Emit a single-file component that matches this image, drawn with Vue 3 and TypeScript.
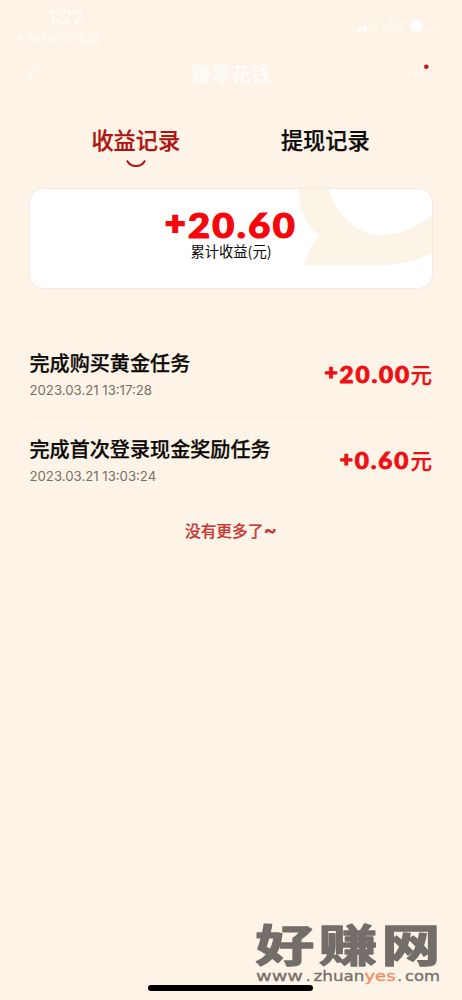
<script setup lang="ts">
interface Entry {
  title: string
  time: string
  amount: string
}

const entries: Entry[] = [
  { title: '完成购买黄金任务', time: '2023.03.21 13:17:28', amount: '20.00' },
  { title: '完成首次登录现金奖励任务', time: '2023.03.21 13:03:24', amount: '0.60' },
]
</script>

<template>
  <main class="screen">
    <header class="top">
      <div class="status">
        <div class="clock">
          <span class="time">1:22</span>
          <span class="back-app"><svg width="7" height="8" viewBox="0 0 7 8"><path d="M7 0v8L0 4z" fill="#fffdfa" /></svg>Safari浏览器</span>
        </div>
        <div class="signals">
          <svg width="22" height="12" viewBox="0 0 22 12" fill="#fffdfa">
            <rect x="1" y="7" width="4" height="5" rx="1" />
            <rect x="7" y="6" width="4" height="6" rx="1" />
            <rect x="13" y="3" width="3" height="9" rx="1" opacity=".25" />
            <rect x="18" y="0" width="3" height="12" rx="1" opacity=".25" />
          </svg>
          <span class="network">4G</span>
          <svg width="28" height="14" viewBox="0 0 28 14">
            <rect x="1" y="1.500" width="23" height="11" rx="3.500" fill="none" stroke="#fffdfa" opacity=".3" />
            <rect x="0" y="1" width="11" height="11" rx="4" fill="#fffefd" />
            <path d="M26 5v4" stroke="#fffdfa" opacity=".4" />
          </svg>
        </div>
      </div>
      <nav class="nav">
        <svg class="chevron" width="14" height="20" viewBox="0 0 14 20"><path d="M11.500 1.500 2 10l9.500 8.500" fill="none" stroke="#fffaf4" stroke-width="1.800" /></svg>
        <span class="nav-title">赚零花钱</span>
        <svg class="more" width="30" height="22" viewBox="0 0 30 22">
          <g fill="#fffaf5"><circle cx="4" cy="13.500" r="2" /><circle cx="11" cy="13.500" r="2" /><circle cx="18" cy="13.500" r="2" /></g>
          <circle cx="22.300" cy="6.800" r="2.300" fill="#c9151b" />
        </svg>
      </nav>
    </header>

    <div class="tabs">
      <button class="tab active">
        收益记录
        <svg class="smile" width="22" height="10" viewBox="0 0 22 10"><path d="M2 1.500C5.500 8.900 16.500 8.900 20 1.500" fill="none" stroke="#b21513" stroke-width="1.900" /></svg>
      </button>
      <button class="tab">提现记录</button>
    </div>

    <section class="card">
      <svg class="swirl" width="134" height="100" viewBox="0 0 134 100">
        <path d="M0 0C1 20 8 36 21 47C14 55 9 65 6 76H86C104 76 120 71 134 64V26C116 41 98 47 74 46C50 37 37 21 31 0Z" fill="#fdf4e8" />
      </svg>
      <strong class="total"><span class="sign">+</span>20.60</strong>
      <span class="caption">累计收益(元)</span>
    </section>

    <ul class="list">
      <li v-for="entry in entries" :key="entry.time" class="row">
        <div class="info">
          <span class="title">{{ entry.title }}</span>
          <span class="date">{{ entry.time }}</span>
        </div>
        <span class="amount"><b><span class="sign">+</span>{{ entry.amount }}</b>元</span>
      </li>
    </ul>
    <p class="end">没有更多了<b>~</b></p>

    <div class="home-bar"></div>
    <svg class="watermark" width="200" height="80" viewBox="0 -10 200 80">
      <g class="brand" transform="translate(4.500 46.800) scale(1.32 1)">
        <text x="0" y="0">好</text>
        <text x="48" y="0">赚</text>
        <text x="95.500" y="0">网</text>
      </g>
      <g class="site">
        <text x="5" y="66" textLength="47" lengthAdjust="spacingAndGlyphs">www</text>
        <text x="55" y="66">.</text>
        <text x="62.500" y="66" textLength="51" lengthAdjust="spacingAndGlyphs">zhuan</text>
        <text class="accent" x="113.500" y="66" textLength="31" lengthAdjust="spacingAndGlyphs">yes</text>
        <text x="146.500" y="66">.</text>
        <text x="154" y="66" textLength="35" lengthAdjust="spacingAndGlyphs">com</text>
      </g>
    </svg>
  </main>
</template>

<style>
html,
body {
  margin: 0;
  background: #fdf4e7;
}
</style>

<style scoped>
.screen {
  position: relative;
  box-sizing: border-box;
  width: 462px;
  height: 1000px;
  overflow: hidden;
  background: #fdf4e7;
  color: #0b0906;
  font-family: "Liberation Sans", "Noto Sans CJK SC", sans-serif;
}
.top {
  height: 117px;
  color: #fffdfa;
}
.status {
  display: flex;
  justify-content: space-between;
  height: 52px;
  padding: 8px 23px 0 15px;
  box-sizing: border-box;
}
.clock {
  display: flex;
  flex-direction: column;
}
.time {
  margin-left: 33px;
  font: 500 18px/19px Inter, sans-serif;
}
.back-app {
  display: flex;
  align-items: center;
  gap: 4px;
  margin-top: 2px;
  font: 500 12.800px/18px Inter, "Noto Sans CJK SC", sans-serif;
  color: #fffaf3;
}
.signals {
  display: flex;
  align-items: center;
  height: 35px;
  gap: 6px;
}
.network {
  font: 400 15px/18px Inter, sans-serif;
  color: #fffaf3;
}
.nav {
  display: grid;
  grid-template-columns: 120px 1fr 120px;
  align-items: center;
  height: 43px;
}
.chevron {
  margin-left: 26px;
}
.nav-title {
  text-align: center;
  font: 500 20px/28px "Noto Sans CJK SC", sans-serif;
}
.more {
  margin-left: 62px;
  margin-top: -6px;
}
.tabs {
  display: grid;
  grid-template-columns: 1fr 1fr;
  height: 71px;
  padding: 0 42px 0 41px;
}
.tab {
  display: flex;
  flex-direction: column;
  align-items: center;
  padding: 6px 0 0;
  border: 0;
  background: none;
  color: #0b0906;
  font: 500 22.2px/32px "Noto Sans CJK SC", sans-serif;
  -webkit-text-stroke: 0.25px currentColor;
}
.active {
  color: #ae1411;
}
.smile {
  margin-top: 4px;
}
.card {
  position: relative;
  display: flex;
  flex-direction: column;
  align-items: center;
  box-sizing: border-box;
  width: 404px;
  height: 101px;
  margin: 0 auto;
  padding-top: 17px;
  overflow: hidden;
  border: 1px solid #f6e8dd;
  border-radius: 14px;
  background: #fff;
}
.swirl {
  position: absolute;
  top: 0;
  right: 0;
}
.total {
  position: relative;
  color: #f8050b;
  font: 900 34.5px/38px Lato, sans-serif;
  letter-spacing: 2.2px;
  -webkit-text-stroke: 1.2px currentColor;
  transform: scaleX(1.1);
}
.sign {
  position: relative;
  top: -0.1em;
  font-size: 0.93em;
  line-height: 1;
  -webkit-text-stroke-width: 0.055em;
}
.caption {
  position: relative;
  margin-top: -3px;
  font: 400 14.300px/20px "Noto Sans CJK SC", sans-serif;
}
.list {
  margin: 42px 30px 0 29.500px;
  padding: 0;
  list-style: none;
}
.row {
  display: flex;
  align-items: center;
  justify-content: space-between;
  box-sizing: border-box;
  height: 86px;
}
.row + .row {
  border-top: 1px solid #f7ece0;
}
.info {
  display: flex;
  flex-direction: column;
}
.title {
  font: 500 20.100px/28px "Noto Sans CJK SC", sans-serif;
  -webkit-text-stroke: 0.25px currentColor;
}
.date {
  margin-top: 4px;
  color: #776f67;
  font: 400 13.200px/19px Inter, sans-serif;
}
.amount {
  display: flex;
  align-items: baseline;
  margin-top: 0;
  color: #ec1015;
  font: 500 21.500px/28px "Noto Sans CJK SC", sans-serif;
  -webkit-text-stroke: 0.3px currentColor;
}
.amount b {
  font: 900 22.5px/28px Lato, sans-serif;
  letter-spacing: 1.7px;
  -webkit-text-stroke: 0.8px currentColor;
  transform: scaleX(1.08);
  transform-origin: right;
}
.end {
  margin: 16px 0 0;
  text-align: center;
  color: #c73a38;
  font: 500 15.700px/24px "Noto Sans CJK SC", sans-serif;
  -webkit-text-stroke: 0.2px currentColor;
}
.end b {
  font: 700 20px/20px Inter, sans-serif;
}
.home-bar {
  position: absolute;
  left: 148px;
  top: 985px;
  width: 165px;
  height: 6px;
  border-radius: 3px;
  background: #000;
}
.watermark {
  position: absolute;
  left: 251px;
  top: 905px;
}
.brand {
  fill: #736e69;
  stroke: #736e69;
  stroke-width: 1.4px;
  stroke-linejoin: round;
  font: 700 44.500px "Noto Sans CJK SC", sans-serif;
}
.site {
  fill: #77716c;
  stroke: #77716c;
  stroke-width: 0.3px;
  font: 400 14px "DejaVu Sans", sans-serif;
}
.accent {
  fill: #f58a66;
  stroke: #f58a66;
}
</style>
